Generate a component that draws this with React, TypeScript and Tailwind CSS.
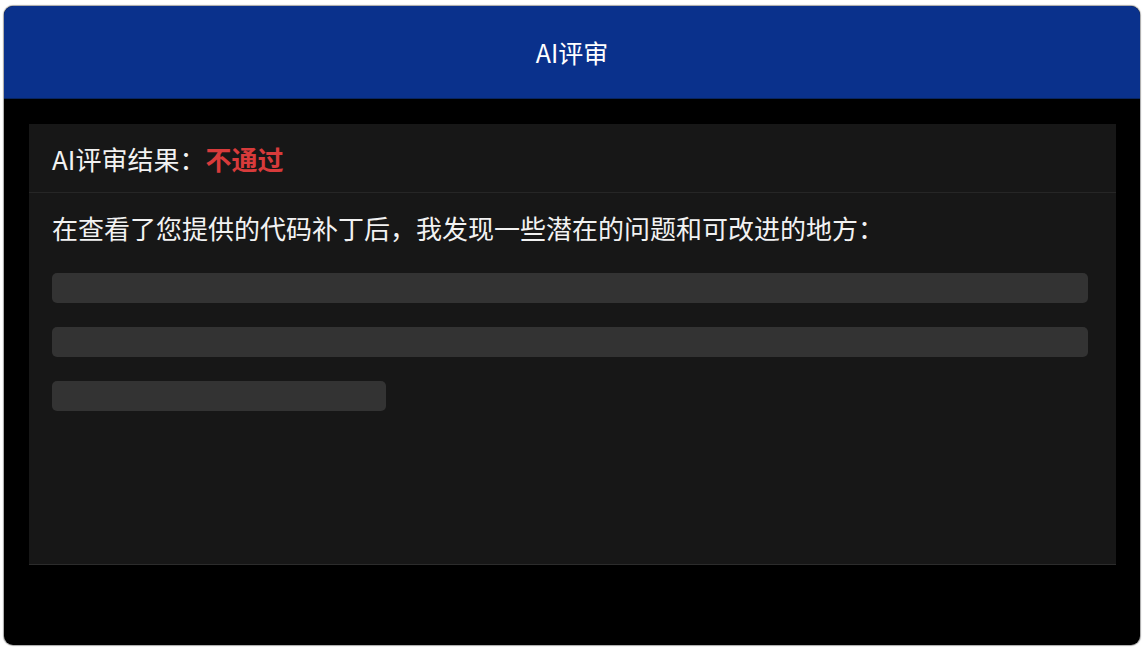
const font = "font-['Noto_Sans_CJK_SC','Noto_Sans',sans-serif]";

const Bar = ({ w }: { w: string }) => (
  <div className={`h-[30px] ${w} rounded-[5px] bg-[#333333]`}></div>
);

export default function App() {
  return (
    <div className={`w-[1145px] h-[649px] bg-white pl-[4px] pt-[6px] ${font}`}>
      <div className="w-[1136px] h-[639px] rounded-[9px] bg-black overflow-hidden shadow-[0_0_1px_1px_rgba(0,0,0,0.35)] flex flex-col">
        <header className="h-[93px] shrink-0 bg-[#0a318c] border-b border-[#08245f] flex items-center justify-center">
          <h1 className="text-[25px] leading-none text-white">AI评审</h1>
        </header>

        <div className="px-[25px] pt-[25px] pr-[24px]">
          <section className="h-[441px] bg-[#171717] border-b border-[#2c2c2c] flex flex-col">
            <div className="h-[69px] shrink-0 border-b border-[#262626] pl-[23px] flex items-center text-[26px] text-[#f2f2f2]">
              <span>AI评审结果：</span>
              <span className="font-bold text-[#d83b3b]">不通过</span>
            </div>

            <div className="pl-[23px] pr-[28px] pt-[17px]">
              <p className="text-[26px] leading-[36px] text-[#f2f2f2]">
                在查看了您提供的代码补丁后，我发现一些潜在的问题和可改进的地方：
              </p>
              <div className="mt-[27px] flex flex-col gap-[24px]">
                <Bar w="w-full" />
                <Bar w="w-full" />
                <Bar w="w-[334px]" />
              </div>
            </div>
          </section>
        </div>
      </div>
    </div>
  );
}
